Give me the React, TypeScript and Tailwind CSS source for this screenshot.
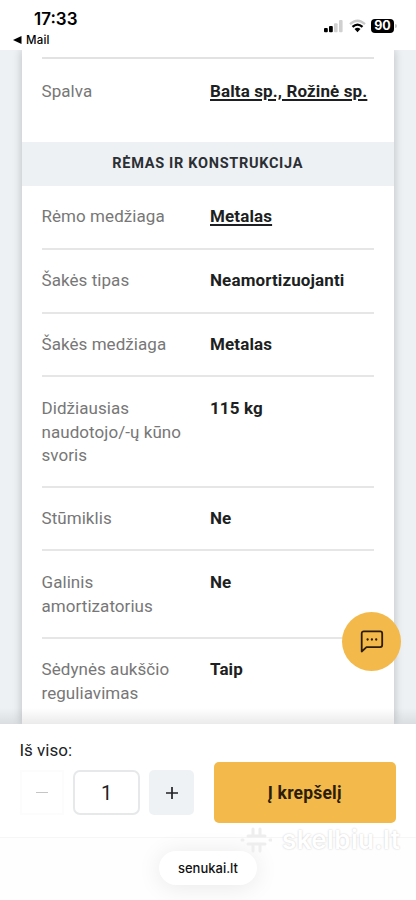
import React from 'react';

type Spec = {
    lines: string[];
    value: string;
    link?: boolean;
    size: string;
};

const specs: Spec[] = [
    { lines: ['Rėmo medžiaga'], value: 'Metalas', link: true, size: 'h-[64px]' },
    { lines: ['Šakės tipas'], value: 'Neamortizuojanti', size: 'h-[64px]' },
    { lines: ['Šakės medžiaga'], value: 'Metalas', size: 'h-[63.8px]' },
    { lines: ['Didžiausias', 'naudotojo/-ų kūno', 'svoris'], value: '115 kg', size: 'h-[110.2px]' },
    { lines: ['Stūmiklis'], value: 'Ne', size: 'h-[63.8px]' },
    { lines: ['Galinis', 'amortizatorius'], value: 'Ne', size: 'h-[87.2px]' },
    { lines: ['Sėdynės aukščio', 'reguliavimas'], value: 'Taip', size: 'h-[90px]' },
];

const SpecRow: React.FC<{ spec: Spec }> = ({ spec }) => (
    <div className={`flex shrink-0 border-b-2 border-[#e6e6e7] pt-[19.8px] text-[17px] leading-[23.5px] ${spec.size}`}>
        <div className="w-[168.5px] shrink-0 tracking-[0.06px] text-[#777777]">
            {spec.lines.map((line) => (
                <div key={line} className="whitespace-nowrap">{line}</div>
            ))}
        </div>
        <div className="whitespace-nowrap font-bold tracking-[0.12px] text-[#1d1f22]">
            {spec.link ? <span className="underline decoration-[1.5px] underline-offset-[2px]">{spec.value}</span> : spec.value}
        </div>
    </div>
);

const StatusBar: React.FC = () => (
    <header className="flex h-[50px] shrink-0 justify-between bg-white font-['Inter',sans-serif] text-black">
        <div className="pt-[8px]">
            <div className="pl-[34px] text-[17px] font-semibold leading-[22px]">17:33</div>
            <div className="flex items-center gap-[4px] pl-[13px] text-[11.5px] font-medium leading-[20px] tracking-[0.2px]">
                <svg width="9" height="8" viewBox="0 0 9 8"><path d="M0 4 8.5 0v8z" /></svg>
                Mail
            </div>
        </div>
        <div className="mt-[19px] flex h-[14px] items-center pr-[19px]">
            <svg width="19" height="14" viewBox="0 0 19 14">
                <rect x="0" y="9" width="3.8" height="4.2" rx="1" />
                <rect x="5" y="7" width="3.8" height="6.2" rx="1" />
                <rect x="10" y="4.3" width="3.6" height="8.9" rx="1" fill="#d0d0d0" />
                <rect x="15" y="1" width="3.6" height="12.2" rx="1" fill="#d0d0d0" />
            </svg>
            <svg className="ml-[6px]" width="17" height="14" viewBox="0 0 17 14" fill="none">
                <path d="M1 5.2Q8.5-1.8 16 5.2" stroke="#c8c8c8" strokeWidth="2.3" />
                <path d="M3.5 7.9Q8.5 3.4 13.5 7.9" stroke="#000" strokeWidth="2.3" />
                <path d="M5.5 10Q8.5 7.6 11.5 10L8.5 13.2z" fill="#000" />
            </svg>
            <div className="ml-[5px] flex h-[14px] w-[23px] items-center justify-center rounded-[4px] bg-black text-[12.5px] font-bold leading-[14px] text-white">
                90
            </div>
            <div className="ml-[1px] h-[4px] w-[2px] rounded-r bg-[#c4c4c4]" />
        </div>
    </header>
);

export default function App() {
    return (
        <div className="relative flex h-[900px] w-[416px] flex-col overflow-hidden bg-white font-['Roboto',sans-serif]">
            <StatusBar />

            <main className="relative flex h-[674px] shrink-0 overflow-hidden bg-[#edf1f4] pl-[22px]">
                <div className="flex w-[371.5px] flex-col bg-white shadow-[0_0_9px_rgba(0,0,0,0.22)]">
                    <div className="mx-[19.5px] h-[9px] shrink-0 border-b-2 border-[#e2e2e3]" />
                    <div className="mx-[19.5px] flex h-[83px] shrink-0 pt-[20.6px] text-[17px] leading-[23.5px]">
                        <div className="w-[168.5px] tracking-[0.06px] text-[#777777]">Spalva</div>
                        <div className="whitespace-nowrap font-bold tracking-[0.12px] text-[#1d1f22] underline decoration-[1.5px] underline-offset-[2px]">Balta sp., Rožinė sp.</div>
                    </div>
                    <h2 className="flex h-[43.6px] shrink-0 items-center justify-center bg-[#eef1f4] pt-px text-[14.5px] font-bold tracking-[0.7px] text-[#2b2f33]">
                        RĖMAS IR KONSTRUKCIJA
                    </h2>
                    <div className="mx-[19.5px] flex flex-col">
                        {specs.map((spec) => (
                            <SpecRow key={spec.lines[0]} spec={spec} />
                        ))}
                    </div>
                </div>
                <div className="absolute inset-x-0 bottom-0 h-[16px] bg-linear-to-b from-transparent to-black/8" />
                <button className="absolute left-[342px] top-[562px] flex size-[59px] items-center justify-center rounded-full bg-[#f3b94a]">
                    <svg width="24" height="24" viewBox="0 0 24 24" fill="none" stroke="#2b1d08" strokeWidth="1.8" strokeLinejoin="round">
                        <path d="M1.7 21.5V3.4a2 2 0 0 1 2-2h16.500a2 2 0 0 1 2 2v11.7a2 2 0 0 1-2 2H6.5z" />
                        <path d="M7.600 9.5h.01M11.9 9.5h.01M16.2 9.5h.01" strokeWidth="2.3" strokeLinecap="round" />
                    </svg>
                </button>
            </main>

            <section className="flex h-[114px] shrink-0 justify-between border-b border-[#f6f6f6] pl-[19.5px] pr-[20px] text-[#202225]">
                <div className="pt-[14px]">
                    <div className="text-[17px] leading-[24px]">Iš viso:</div>
                    <div className="mt-[8px] flex">
                        <button className="flex h-[45px] w-[44px] items-center justify-center border-2 border-[#fcfcfc]">
                            <span className="h-[1.5px] w-[12px] bg-[#c5c5c5]" />
                        </button>
                        <div className="ml-[9.5px] flex h-[45px] w-[67px] items-center justify-center rounded-[7px] border-2 border-[#e6e8ea] text-[20px]">1</div>
                        <button className="ml-[9px] flex size-[45px] items-center justify-center rounded-[5px] bg-[#eff2f5]">
                            <svg width="12" height="12" viewBox="0 0 12 12" stroke="#202225" strokeWidth="1.7"><path d="M6 0v12M0 6h12" /></svg>
                        </button>
                    </div>
                </div>
                <button className="mt-[38px] h-[61px] w-[182.5px] rounded-[5px] bg-[#f3b94a] pt-px text-[17.5px] font-bold tracking-[0.2px] text-[#2b1d08]">Į krepšelį</button>
            </section>

            <footer className="flex grow justify-center bg-[#fefefe] pt-[13px] font-['Inter',sans-serif]">
                <div className="flex h-[34px] w-[98px] items-center justify-center rounded-full bg-white text-[13px] font-medium text-[#111111] shadow-[0_2px_24px_rgba(0,0,0,0.09)]"><span className="pt-px">senukai.lt</span></div>
            </footer>

            {/* watermark */}
            <div className="absolute left-[240px] top-[824px] flex items-center gap-[10px]">
                <svg width="32" height="28" viewBox="0 0 32 28" stroke="#eeeeee" strokeWidth="3" strokeLinecap="round">
                    <path d="M13 3v7M20 3v7M13 18v7M20 18v7M8 10h17M8 18h17M2 14h1M30 14h1" />
                </svg>
                <span className="font-['Inter',sans-serif] text-[26px] font-semibold leading-[32px] tracking-[0.4px] text-white [text-shadow:0_0_2px_#c8c8c8]">skelbiu.lt</span>
            </div>
        </div>
    );
}
